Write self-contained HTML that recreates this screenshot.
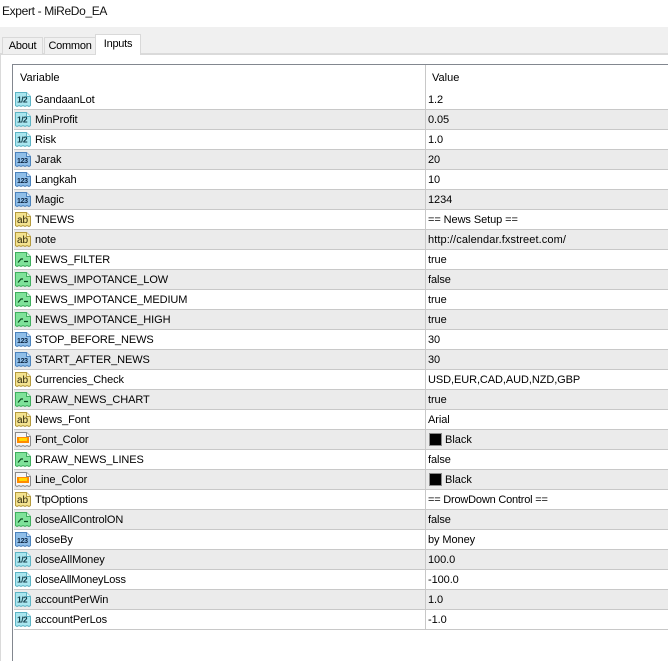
<!DOCTYPE html>
<html><head><meta charset="utf-8"><style>
html,body{margin:0;padding:0;background:#fff}
#p{position:relative;width:668px;height:661px;overflow:hidden;background:#fff;font:11px "Liberation Sans",sans-serif;color:#000}
#p div{position:absolute;box-sizing:border-box;white-space:nowrap}
.r{left:14px;width:654px;height:20px;border-bottom:1px solid #c8c8c8;background:#fff}
.g{background:#ebebeb}
.n{left:21px;top:3px;line-height:15px;letter-spacing:-.1px}
.v{left:414px;top:3px;line-height:15px;letter-spacing:-.08px}
.r svg{position:absolute;left:1px;top:1px}
.s{left:415px;top:3px;width:13px;height:13px;background:#000;border:1px solid #8a8a8a}
.b{left:431px;top:3px;line-height:15px}
.t{background:#f0f0f0;border:1px solid #d9d9d9;border-bottom:none;text-align:center;letter-spacing:-.25px}
svg text{font-family:"Liberation Sans",sans-serif}
</style></head><body><div id="p">
<svg width="0" height="0" style="position:absolute">
<defs>
<symbol id="a" viewBox="0 0 17 17"><path d="M.5 1.500h11l4 4v9l-1.500 1-2-1-2 1-2-1-2 1-2-1-2 1-1.500-1z" fill="#a9e6ef" stroke="#5db4c4"/><path d="M11.500 1.500v4h4" fill="#e4f8fb" stroke="#5db4c4"/><text x="2" y="11.500" font-size="8.500" letter-spacing="-.6" font-weight="bold" fill="#123c48">1/2</text></symbol>
<symbol id="b" viewBox="0 0 17 17"><path d="M.5 1.500h11l4 4v9l-1.500 1-2-1-2 1-2-1-2 1-2-1-2 1-1.500-1z" fill="#8fbee8" stroke="#4a82bc"/><path d="M11.500 1.500v4h4" fill="#d8e9f8" stroke="#4a82bc"/><text x="2" y="12" font-size="7" font-weight="bold" letter-spacing="-.3" fill="#0b2440">123</text></symbol>
<symbol id="c" viewBox="0 0 17 17"><path d="M.5 1.500h11l4 4v9l-1.500 1-2-1-2 1-2-1-2 1-2-1-2 1-1.500-1z" fill="#f3e28f" stroke="#b49a3c"/><path d="M11.500 1.500v4h4" fill="#fbf5d0" stroke="#b49a3c"/><text x="2" y="12" font-size="10" fill="#2b2508">ab</text></symbol>
<symbol id="d" viewBox="0 0 17 17"><path d="M.5 1.500h11l4 4v9l-1.500 1-2-1-2 1-2-1-2 1-2-1-2 1-1.500-1z" fill="#7fe29a" stroke="#3fae5e"/><path d="M11.500 1.500v4h4" fill="#d2f6dc" stroke="#3fae5e"/><path d="M3 11.500l3-3.500h2M9 10.500h4" fill="none" stroke="#0c4a20" stroke-width="1.200"/></symbol>
<symbol id="e" viewBox="0 0 17 17"><path d="M.5 1.500h11l4 4v9l-1.500 1-2-1-2 1-2-1-2 1-2-1-2 1-1.500-1z" fill="#f6f6f6" stroke="#8a8a8a"/><path d="M11.500 1.500v4h4" fill="#fff" stroke="#8a8a8a"/><rect x="2" y="6" width="12" height="6" fill="#ff8a00"/><rect x="4" y="7" width="8" height="3" fill="#ffd800"/></symbol>
</defs>
</svg>

<div style="left:2px;top:3px;font-size:12px;letter-spacing:-.35px;line-height:16px;color:#111">Expert - MiReDo_EA</div>
<div style="left:0;top:27px;width:668px;height:28px;background:#f0f0f0;border-bottom:2px solid #dadada"></div>
<div class="t" style="left:2px;top:37px;width:41px;height:17px;line-height:17px">About</div>
<div class="t" style="left:44px;top:37px;width:52px;height:17px;line-height:17px">Common</div>
<div class="t" style="left:95px;top:34px;width:46px;height:21px;line-height:18px;background:#fff">Inputs</div>
<div style="left:0;top:55px;width:1px;height:606px;background:#dadada"></div>
<div style="left:12px;top:64px;width:656px;height:597px;border-left:1px solid #82878f;border-top:1px solid #82878f"></div>
<div style="left:20px;top:71px;line-height:15px">Variable</div>
<div style="left:432px;top:71px;line-height:15px">Value</div>

<div class="r" style="top:90px"><svg width="17" height="17"><use href="#a"/></svg><div class="n">GandaanLot</div><div class="v">1.2</div></div>
<div class="r g" style="top:110px"><svg width="17" height="17"><use href="#a"/></svg><div class="n">MinProfit</div><div class="v">0.05</div></div>
<div class="r" style="top:130px"><svg width="17" height="17"><use href="#a"/></svg><div class="n">Risk</div><div class="v">1.0</div></div>
<div class="r g" style="top:150px"><svg width="17" height="17"><use href="#b"/></svg><div class="n">Jarak</div><div class="v">20</div></div>
<div class="r" style="top:170px"><svg width="17" height="17"><use href="#b"/></svg><div class="n">Langkah</div><div class="v">10</div></div>
<div class="r g" style="top:190px"><svg width="17" height="17"><use href="#b"/></svg><div class="n">Magic</div><div class="v">1234</div></div>
<div class="r" style="top:210px"><svg width="17" height="17"><use href="#c"/></svg><div class="n">TNEWS</div><div class="v">== News Setup ==</div></div>
<div class="r g" style="top:230px"><svg width="17" height="17"><use href="#c"/></svg><div class="n">note</div><div class="v" style="letter-spacing:.1px">http://calendar.fxstreet.com/</div></div>
<div class="r" style="top:250px"><svg width="17" height="17"><use href="#d"/></svg><div class="n">NEWS_FILTER</div><div class="v">true</div></div>
<div class="r g" style="top:270px"><svg width="17" height="17"><use href="#d"/></svg><div class="n">NEWS_IMPOTANCE_LOW</div><div class="v">false</div></div>
<div class="r" style="top:290px"><svg width="17" height="17"><use href="#d"/></svg><div class="n">NEWS_IMPOTANCE_MEDIUM</div><div class="v">true</div></div>
<div class="r g" style="top:310px"><svg width="17" height="17"><use href="#d"/></svg><div class="n">NEWS_IMPOTANCE_HIGH</div><div class="v">true</div></div>
<div class="r" style="top:330px"><svg width="17" height="17"><use href="#b"/></svg><div class="n">STOP_BEFORE_NEWS</div><div class="v">30</div></div>
<div class="r g" style="top:350px"><svg width="17" height="17"><use href="#b"/></svg><div class="n">START_AFTER_NEWS</div><div class="v">30</div></div>
<div class="r" style="top:370px"><svg width="17" height="17"><use href="#c"/></svg><div class="n">Currencies_Check</div><div class="v">USD,EUR,CAD,AUD,NZD,GBP</div></div>
<div class="r g" style="top:390px"><svg width="17" height="17"><use href="#d"/></svg><div class="n">DRAW_NEWS_CHART</div><div class="v">true</div></div>
<div class="r" style="top:410px"><svg width="17" height="17"><use href="#c"/></svg><div class="n">News_Font</div><div class="v">Arial</div></div>
<div class="r g" style="top:430px"><svg width="17" height="17"><use href="#e"/></svg><div class="n">Font_Color</div><div class="s"></div><div class="b">Black</div></div>
<div class="r" style="top:450px"><svg width="17" height="17"><use href="#d"/></svg><div class="n">DRAW_NEWS_LINES</div><div class="v">false</div></div>
<div class="r g" style="top:470px"><svg width="17" height="17"><use href="#e"/></svg><div class="n">Line_Color</div><div class="s"></div><div class="b">Black</div></div>
<div class="r" style="top:490px"><svg width="17" height="17"><use href="#c"/></svg><div class="n">TtpOptions</div><div class="v" style="letter-spacing:-.2px">== DrowDown Control ==</div></div>
<div class="r g" style="top:510px"><svg width="17" height="17"><use href="#d"/></svg><div class="n">closeAllControlON</div><div class="v">false</div></div>
<div class="r" style="top:530px"><svg width="17" height="17"><use href="#b"/></svg><div class="n">closeBy</div><div class="v">by Money</div></div>
<div class="r g" style="top:550px"><svg width="17" height="17"><use href="#a"/></svg><div class="n">closeAllMoney</div><div class="v">100.0</div></div>
<div class="r" style="top:570px"><svg width="17" height="17"><use href="#a"/></svg><div class="n" style="letter-spacing:-.2px">closeAllMoneyLoss</div><div class="v">-100.0</div></div>
<div class="r g" style="top:590px"><svg width="17" height="17"><use href="#a"/></svg><div class="n">accountPerWin</div><div class="v">1.0</div></div>
<div class="r" style="top:610px"><svg width="17" height="17"><use href="#a"/></svg><div class="n">accountPerLos</div><div class="v">-1.0</div></div>
<div style="left:425px;top:65px;width:1px;height:565px;background:#c8c8c8"></div>
</div></body></html>
